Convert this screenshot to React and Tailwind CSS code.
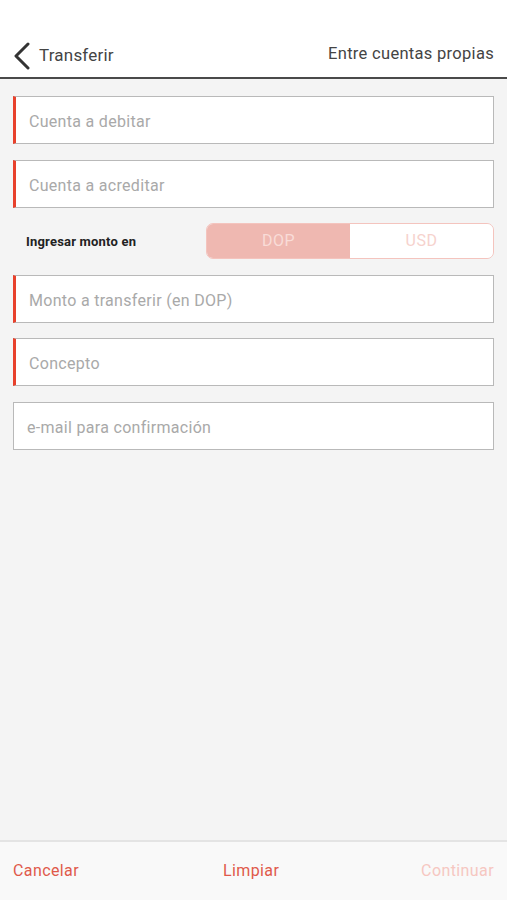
import React from "react";

function Field({ label, required }) {
  return (
    <div
      className={`h-[48px] bg-white border border-[#b9b9b9] flex items-center pt-[3px] ${
        required ? "border-l-[3px] border-l-[#e8412c] pl-[13px]" : "pl-[13px]"
      }`}
    >
      <span className="text-[16px] text-[#a9a9a9] tracking-[0.3px]">{label}</span>
    </div>
  );
}

export default function App() {
  return (
    <div
      className="w-[507px] h-[900px] flex flex-col bg-[#f4f4f4] overflow-hidden"
      style={{ fontFamily: "Roboto, 'Noto Sans', sans-serif" }}
    >
      <header className="h-[79px] bg-white border-b-2 border-[#4a4a4a] flex items-end pb-[7px] px-[13px] shrink-0">
        <div className="flex items-center flex-1">
          <svg width="18" height="28" viewBox="0 0 18 28" className="mr-[8px]">
            <path d="M15 2 L3 14 L15 26" fill="none" stroke="#333" strokeWidth="3" strokeLinecap="round" strokeLinejoin="round" />
          </svg>
          <span className="text-[17px] text-[#444] tracking-[0.2px]">Transferir</span>
        </div>
        <span className="text-[16.5px] text-[#444] tracking-[0.3px] mb-[3px]">Entre cuentas propias</span>
      </header>

      <main className="flex-1 px-[13px] pt-[17px] flex flex-col">
        <Field label="Cuenta a debitar" required />
        <div className="mt-[16px]">
          <Field label="Cuenta a acreditar" required />
        </div>
        <div className="mt-[15px] flex items-center h-[36px]">
          <span className="pl-[13px] w-[193px] text-[13px] font-bold text-[#222] tracking-[0.2px] pt-[2px]">Ingresar monto en</span>
          <div className="flex-1 h-[36px] flex rounded-[7px] border border-[#f4c4be] overflow-hidden">
            <div className="flex-1 bg-[#efb8b1] flex items-center justify-center text-[16px] text-[#f9dcd8] tracking-[0.5px]">DOP</div>
            <div className="flex-1 bg-white flex items-center justify-center text-[16px] text-[#f6d2cd] tracking-[0.5px]">USD</div>
          </div>
        </div>
        <div className="mt-[16px]">
          <Field label="Monto a transferir (en DOP)" required />
        </div>
        <div className="mt-[15px]">
          <Field label="Concepto" required />
        </div>
        <div className="mt-[16px]">
          <Field label="e-mail para confirmación" />
        </div>
      </main>

      <footer className="h-[60px] shrink-0 border-t-2 border-[#e4e4e4] bg-[#f9f9f9] flex items-center justify-between px-[13px] pb-[1px]">
        <span className="text-[16px] text-[#e0594b] tracking-[0.4px]">Cancelar</span>
        <span className="text-[16px] text-[#e0594b] tracking-[0.4px] ml-[2px]">Limpiar</span>
        <span className="text-[16px] text-[#f6c7c1] tracking-[0.4px]">Continuar</span>
      </footer>
    </div>
  );
}
